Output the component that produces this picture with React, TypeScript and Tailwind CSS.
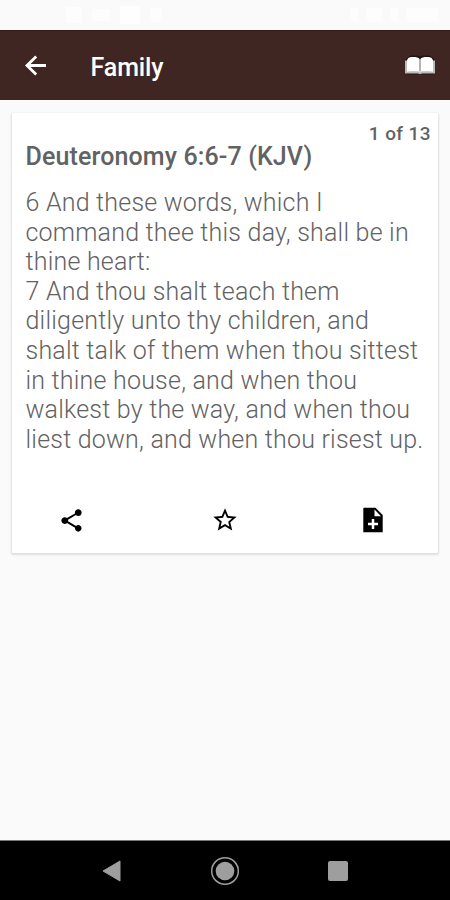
import { MdShare, MdStarBorder } from "react-icons/md";

const verseLines = [
  "6 And these words, which I",
  "command thee this day, shall be in",
  "thine heart:",
  "7 And thou shalt teach them",
  "diligently unto thy children, and",
  "shalt talk of them when thou sittest",
  "in thine house, and when thou",
  "walkest by the way, and when thou",
  "liest down, and when thou risest up.",
];

function BackIcon() {
  return (
    <svg width="26" height="26" viewBox="0 0 26 26" fill="none" stroke="currentColor" strokeWidth="2.8">
      <path d="M23 12.500H4M13.200 3.500 4 12.500 13.200 21.500" />
    </svg>
  );
}

function BookIcon() {
  return (
    <svg width="32" height="22" viewBox="0 0 32 22">
      <path d="M1 5 3.500 2.500 6 .5h8l2 1 2-1h8l2.500 2L31 5v14.500H1z" fill="#241411" />
      <path d="M1 5.500h3V16h24V5.500h3V18.500H18l-2 .8-2-.8H1z" fill="#bdbab8" />
      <path d="M3 5.500C4 2.500 5.500 2 9 2c3.500 0 5.500.5 6.500 2v12.700c-2-.6-8-.6-12.500 0z" fill="#fff" />
      <path d="M29 5.500C28 2.500 26.500 2 23 2c-3.500 0-5.500.5-6.500 2v12.700c2-.6 8-.6 12.500 0z" fill="#fff" />
      <path d="M16 4v14" stroke="#dcdcdc" />
    </svg>
  );
}

function NoteAddIcon() {
  return (
    <svg width="28" height="28" viewBox="0 0 28 28">
      <path d="M5 1.800h11.500L23.700 9v17.200H4.300V2.500z" fill="currentColor" />
      <path d="M15.500 3.500v6.700h6.500z" fill="#fff" />
      <path d="M14 13v10M9 18h10" stroke="#fff" strokeWidth="2.500" />
    </svg>
  );
}

// White icons on a near-white bar
function StatusBar() {
  return (
    <div className="flex h-[30px] items-center justify-between bg-[#fafafa] pr-3 pl-[66px]">
      <div className="flex items-center gap-[10px]">
        <div className="size-4 bg-[#fdfdfd]" />
        <div className="h-3 w-[18px] bg-[#fdfdfd]" />
        <div className="h-[18px] w-5 bg-[#fefefe]" />
        <div className="h-3.5 w-3 bg-[#fdfdfd]" />
      </div>
      <div className="flex items-center gap-2">
        <div className="h-3.5 w-2 bg-[#fdfdfd]" />
        <div className="h-3.5 w-4 bg-[#fdfdfd]" />
        <div className="h-3.5 w-2 bg-[#fdfdfd]" />
        <div className="h-3.5 w-8 bg-[#fdfdfd]" />
      </div>
    </div>
  );
}

function Header() {
  return (
    <header className="flex h-[70px] items-center border-t border-[#2f1b18] bg-[#402622] pr-[14px] pl-[23px] text-white">
      <button aria-label="Back">
        <BackIcon />
      </button>
      <h1 className="ml-[41.500px] flex-1 pt-[4px] text-[25px] leading-[30px] font-medium tracking-[-0.1px]">Family</h1>
      <button aria-label="Read">
        <BookIcon />
      </button>
    </header>
  );
}

function VerseCard() {
  return (
    <article className="mx-3 mt-[13px] flex h-[440px] flex-col rounded-[1px] bg-white text-[#626262] shadow-[0_1px_2px_1px_rgba(0,0,0,0.11)]">
      <div className="flex h-[30px] items-start justify-end pt-[10px] pr-[7px] text-[19px] leading-[22px] font-medium tracking-[0.4px]">
        1 of 13
      </div>
      <h2 className="pl-[13.5px] text-[25px] leading-[28px] font-medium tracking-[0.13px]">Deuteronomy 6:6-7 (KJV)</h2>
      <div className="mt-[17px] pl-[13.5px] text-[25px] leading-[29.6px] font-light tracking-[0.21px] whitespace-nowrap">
        {verseLines.map((line) => (
          <p key={line}>{line}</p>
        ))}
      </div>
      <div className="mt-auto mb-[19px] flex items-center pl-[46px] text-black">
        <button aria-label="Share">
          <MdShare className="size-[27px]" />
        </button>
        <button aria-label="Favorite" className="ml-[126px]">
          <MdStarBorder className="size-[28px]" />
        </button>
        <button aria-label="Add note" className="ml-[120px]">
          <NoteAddIcon />
        </button>
      </div>
    </article>
  );
}

function NavBar() {
  return (
    <nav className="flex h-[60px] items-center justify-between border-t border-[#777] bg-black pr-[102px] pl-[101px]">
      <svg width="20" height="22" viewBox="0 0 20 22">
        <path d="M2 11 19 1v20z" fill="#9e9e9e" stroke="#9e9e9e" strokeLinejoin="round" />
      </svg>
      <svg width="30" height="30" viewBox="0 0 30 30">
        <circle cx="15" cy="15" r="13.300" fill="none" stroke="#9e9e9e" strokeWidth="1.500" />
        <circle cx="15" cy="15" r="9.300" fill="#9e9e9e" />
      </svg>
      <div className="size-5 rounded-[2px] bg-[#9e9e9e]" />
    </nav>
  );
}

export default function App() {
  return (
    <div className="flex h-[900px] w-[450px] flex-col bg-[#fafafa] font-['Roboto',sans-serif]">
      <StatusBar />
      <Header />
      <main className="flex-1">
        <VerseCard />
      </main>
      <NavBar />
    </div>
  );
}
